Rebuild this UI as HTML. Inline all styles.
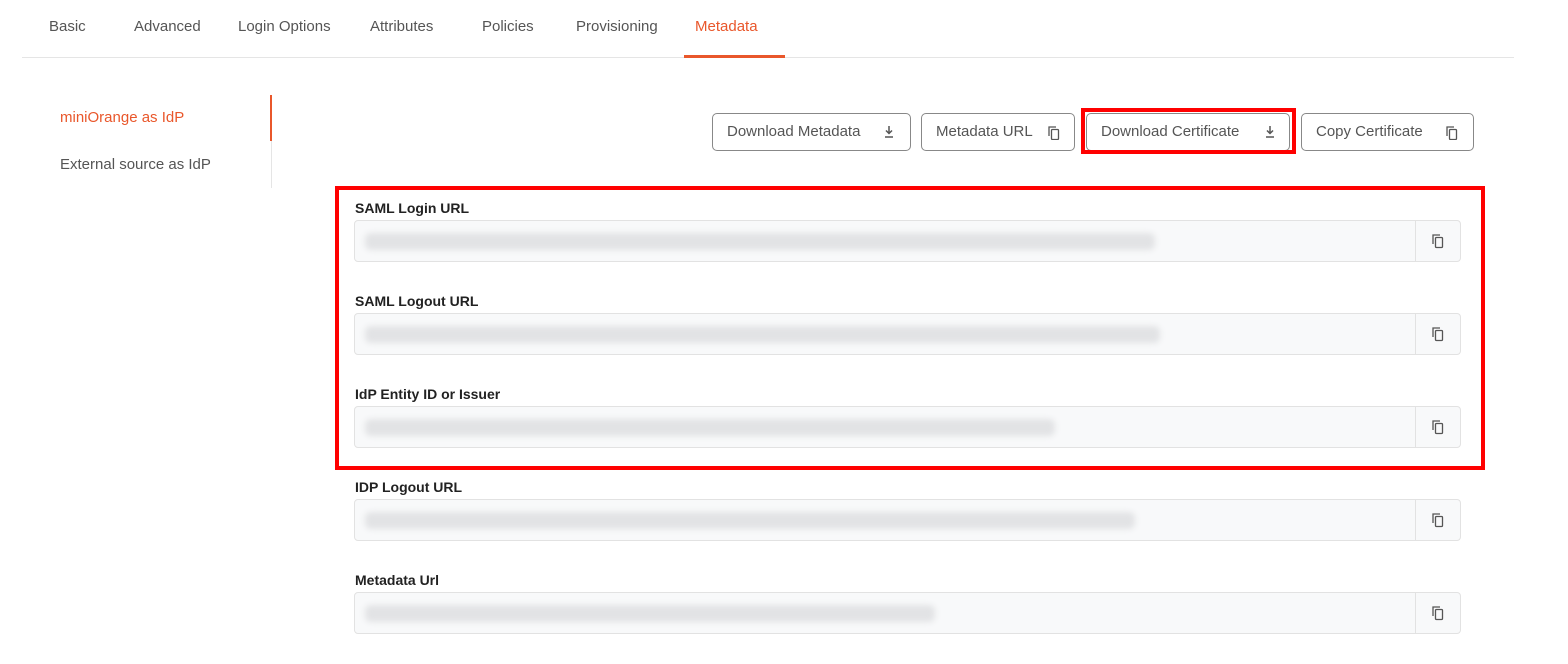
<!DOCTYPE html><html><head><style>
body{margin:0;width:1568px;height:664px;background:#fff;font-family:"Liberation Sans",sans-serif;position:relative;overflow:hidden;color:#555}
.a{position:absolute}
.tab{position:absolute;top:18px;font-size:15px;color:#555}
.btn{position:absolute;top:113px;height:38px;border:1px solid #888;border-radius:5px;font-size:15px;color:#555;box-sizing:border-box;line-height:36px;padding-left:14px}
.btn svg{position:absolute;top:12px}
.lbl{position:absolute;left:355px;font-size:14px;font-weight:bold;color:#222}
.inp{position:absolute;left:354px;width:1107px;height:42px;border:1px solid #e2e2e2;border-radius:4px;background:#f8f9fa;box-sizing:border-box}
.inp .cp{position:absolute;right:0;top:0;width:44px;height:40px;border-left:1px solid #e2e2e2}
.bar{position:absolute;top:12px;left:10px;height:17px;background:#e2e3e5;filter:blur(3px);border-radius:6px}
svg{position:absolute}
</style></head><body>
<div class="tab" style="left:49px">Basic</div>
<div class="tab" style="left:134px">Advanced</div>
<div class="tab" style="left:238px">Login Options</div>
<div class="tab" style="left:370px">Attributes</div>
<div class="tab" style="left:482px">Policies</div>
<div class="tab" style="left:576px">Provisioning</div>
<div class="tab" style="left:695px;color:#e9572b">Metadata</div>
<div class="a" style="left:22px;top:57px;width:1492px;height:1px;background:#e5e5e5"></div>
<div class="a" style="left:684px;top:55px;width:101px;height:3px;background:#e9572b"></div>
<div class="a" style="left:60px;top:109px;font-size:15px;color:#e9572b">miniOrange as IdP</div>
<div class="a" style="left:60px;top:156px;font-size:15px;color:#555">External source as IdP</div>
<div class="a" style="left:270px;top:95px;width:2px;height:46px;background:#e9572b"></div>
<div class="a" style="left:271px;top:141px;width:1px;height:47px;background:#e5e5e5"></div>
<div class="btn" style="left:712px;width:199px">Download Metadata<svg style="left:171px" width="10" height="12"><path d="M5 0v7M2 4.5l3 3 3-3M1 11h8" stroke="#555" stroke-width="1.5" fill="none"/></svg></div>
<div class="btn" style="left:921px;width:154px">Metadata URL<svg style="left:126px" width="12" height="14" fill="none" stroke="#555" stroke-width="1.3"><path d="M1 10V1h7"/><rect x="3.5" y="3.5" width="7" height="10" rx="1"/></svg></div>
<div class="btn" style="left:1086px;width:204px">Download Certificate<svg style="left:178px" width="10" height="12"><path d="M5 0v7M2 4.5l3 3 3-3M1 11h8" stroke="#555" stroke-width="1.5" fill="none"/></svg></div>
<div class="btn" style="left:1301px;width:173px">Copy Certificate<svg style="left:144px" width="12" height="14" fill="none" stroke="#555" stroke-width="1.3"><path d="M1 10V1h7"/><rect x="3.5" y="3.5" width="7" height="10" rx="1"/></svg></div>
<div class="a" style="left:1081px;top:108px;width:215px;height:46px;border:4px solid #f00;box-sizing:border-box"></div>
<div class="a" style="left:335px;top:186px;width:1150px;height:284px;border:4px solid #f00;box-sizing:border-box"></div>

<div class="lbl" style="top:200px">SAML Login URL</div>
<div class="inp" style="top:220px"><div class="bar" style="width:790px"></div><div class="cp"></div></div>
<div class="lbl" style="top:293px">SAML Logout URL</div>
<div class="inp" style="top:313px"><div class="bar" style="width:795px"></div><div class="cp"></div></div>
<div class="lbl" style="top:386px">IdP Entity ID or Issuer</div>
<div class="inp" style="top:406px"><div class="bar" style="width:690px"></div><div class="cp"></div></div>
<div class="lbl" style="top:479px">IDP Logout URL</div>
<div class="inp" style="top:499px"><div class="bar" style="width:770px"></div><div class="cp"></div></div>
<div class="lbl" style="top:572px">Metadata Url</div>
<div class="inp" style="top:592px"><div class="bar" style="width:570px"></div><div class="cp"></div></div>

<svg width="1568" height="664" style="left:0;top:0">
<g fill="none" stroke="#555" stroke-width="1.3">
<g transform="translate(1433,235)"><path d="M0 9V0h7"/><rect x="2.5" y="2.5" width="7" height="10" rx="1"/></g>
<g transform="translate(1433,328)"><path d="M0 9V0h7"/><rect x="2.5" y="2.5" width="7" height="10" rx="1"/></g>
<g transform="translate(1433,421)"><path d="M0 9V0h7"/><rect x="2.5" y="2.5" width="7" height="10" rx="1"/></g>
<g transform="translate(1433,514)"><path d="M0 9V0h7"/><rect x="2.5" y="2.5" width="7" height="10" rx="1"/></g>
<g transform="translate(1433,607)"><path d="M0 9V0h7"/><rect x="2.5" y="2.5" width="7" height="10" rx="1"/></g>
</g></svg>
</body></html>
